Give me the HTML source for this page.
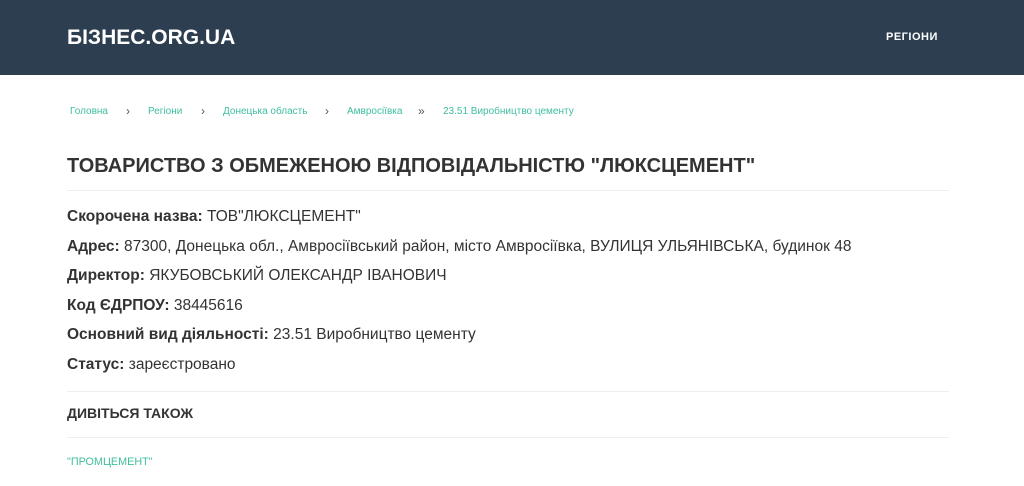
<!DOCTYPE html>
<html><head><meta charset="utf-8"><style>
body{margin:0;background:#fff;font-family:"Liberation Sans",sans-serif;color:#333;}
.hdr{height:75px;background:#2c3e50;position:relative;}
.logo{position:absolute;left:67px;top:26px;color:#fff;font-weight:bold;font-size:21px;}
.nav{position:absolute;left:886px;top:31px;color:#fff;font-weight:bold;font-size:11px;letter-spacing:0.5px;}
.bc{position:absolute;top:106px;font-size:10px;color:#3fbf9f;}
.sep{position:absolute;top:104px;font-size:12px;color:#555;}
.t{position:absolute;left:67px;top:155px;font-size:20px;font-weight:bold;}
.hr{position:absolute;left:67px;width:882px;height:1px;background:#eee;}
.r{position:absolute;left:67px;font-size:15.5px;}
b{font-weight:bold;}
</style></head><body>
<div class="hdr"><div class="logo">БІЗНЕС.ORG.UA</div><div class="nav">РЕГІОНИ</div></div>
<span class="bc" style="left:70px">Головна</span><span class="sep" style="left:126px">›</span>
<span class="bc" style="left:148px">Регіони</span><span class="sep" style="left:201px">›</span>
<span class="bc" style="left:223px">Донецька область</span><span class="sep" style="left:325px">›</span>
<span class="bc" style="left:347px">Амвросіївка</span><span class="sep" style="left:418px">»</span>
<span class="bc" style="left:443px">23.51 Виробництво цементу</span>
<div class="t">ТОВАРИСТВО З ОБМЕЖЕНОЮ ВІДПОВІДАЛЬНІСТЮ "ЛЮКСЦЕМЕНТ"</div>
<div class="hr" style="top:190px"></div>
<div class="r" style="top:208px"><b>Скорочена назва:</b> ТОВ"ЛЮКСЦЕМЕНТ"</div>
<div class="r" style="top:238px"><b>Адрес:</b> 87300, Донецька обл., Амвросіївський район, місто Амвросіївка, ВУЛИЦЯ УЛЬЯНІВСЬКА, будинок 48</div>
<div class="r" style="top:267px"><b>Директор:</b> ЯКУБОВСЬКИЙ ОЛЕКСАНДР ІВАНОВИЧ</div>
<div class="r" style="top:297px"><b>Код ЄДРПОУ:</b> 38445616</div>
<div class="r" style="top:326px"><b>Основний вид діяльності:</b> 23.51 Виробництво цементу</div>
<div class="r" style="top:356px"><b>Статус:</b> зареєстровано</div>
<div class="hr" style="top:391px"></div>
<div class="r" style="top:405px;font-size:14px;font-weight:bold">ДИВІТЬСЯ ТАКОЖ</div>
<div class="hr" style="top:437px"></div>
<div class="bc" style="left:67px;top:456px;font-size:10.8px">"ПРОМЦЕМЕНТ"</div>
</body></html>
